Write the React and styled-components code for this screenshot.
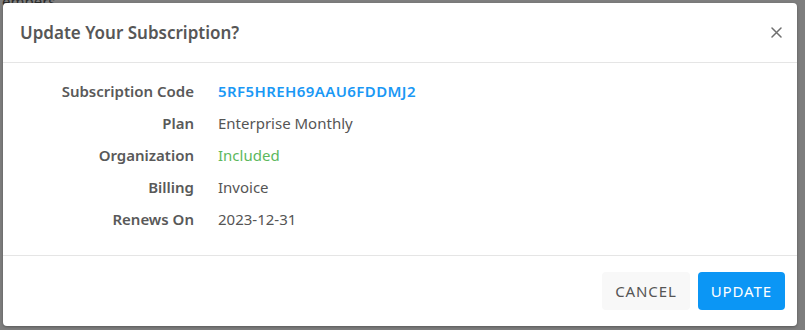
import React from 'react'
import styled, { createGlobalStyle } from 'styled-components'

const GlobalStyle = createGlobalStyle`
  html, body {
    margin: 0;
    padding: 0;
    height: 100%;
  }
  body {
    background: #7e7e7e;
    font-family: "Noto Sans", "Open Sans", sans-serif;
    overflow: hidden;
  }
`;

const details = [
  { label: 'Subscription Code', value: '5RF5HREH69AAU6FDDMJ2', tone: 'code' },
  { label: 'Plan', value: 'Enterprise Monthly' },
  { label: 'Organization', value: 'Included', tone: 'good' },
  { label: 'Billing', value: 'Invoice' },
  { label: 'Renews On', value: '2023-12-31' },
];

export default function App() {
  return (
    <>
      <GlobalStyle />
      <Backdrop>
        <BehindText>embers</BehindText>
        <Modal>
          <Header>
            <Title>Update Your Subscription?</Title>
            <Close aria-label="close">
              <svg width="11" height="11" viewBox="0 0 11 11">
                <path d="M1 1 L10 10 M10 1 L1 10" stroke="#6f6f6f" strokeWidth="1.5" strokeLinecap="round" />
              </svg>
            </Close>
          </Header>
          <Body>
            {details.map(({ label, value, tone }) => (
              <Row key={label}>
                <Label>{label}</Label>
                <Value $tone={tone}>{value}</Value>
              </Row>
            ))}
          </Body>
          <Footer>
            <Button>Cancel</Button>
            <Button $primary>Update</Button>
          </Footer>
        </Modal>
      </Backdrop>
    </>
  )
}

const Backdrop = styled.div`
  position: relative;
  height: 330px;
  padding: 3px 8px 4px 3px;
  box-sizing: border-box;
`;

const BehindText = styled.span`
  position: absolute;
  top: -9px;
  left: 2px;
  font-size: 15px;
  color: #2c2c2c;
`;

const Modal = styled.div`
  position: relative;
  width: 794px;
  height: 323px;
  background: #fff;
  border-radius: 4px;
  display: flex;
  flex-direction: column;
  box-shadow: 0 1px 3px rgba(0,0,0,0.3);
`;

const Header = styled.div`
  height: 59px;
  display: flex;
  align-items: center;
  justify-content: space-between;
  padding: 0 15px 0 17px;
  border-bottom: 1px solid #e5e5e5;
`;

const Title = styled.h2`
  margin: 0;
  font-size: 17px;
  font-weight: 600;
  color: #575757;
`;

const Close = styled.button`
  border: none;
  background: none;
  padding: 0;
  display: flex;
  cursor: pointer;
`;

const Body = styled.div`
  flex: 1;
  padding: 12px 0 20px;
  border-bottom: 1px solid #e5e5e5;
`;

const Row = styled.div`
  display: grid;
  grid-template-columns: 191px 1fr;
  column-gap: 24px;
  height: 32px;
  align-items: center;
  font-size: 15px;
`;

const Label = styled.span`
  text-align: right;
  font-weight: 600;
  color: #595959;
`;

const toneColor = {
  code: '#1a98f5',
  good: '#5cb85c',
};

const Value = styled.span`
  color: ${p => toneColor[p.$tone] || '#555'};
  font-weight: ${p => (p.$tone === 'code' ? 600 : 400)};
  letter-spacing: ${p => (p.$tone === 'code' ? '0.4px' : 'normal')};
`;

const Footer = styled.div`
  height: 71px;
  display: flex;
  align-items: center;
  justify-content: flex-end;
  gap: 8px;
  padding: 0 12px;
`;

const Button = styled.button`
  height: 38px;
  padding: 0 13px;
  border: none;
  border-radius: 4px;
  font-family: inherit;
  font-size: 15px;
  letter-spacing: 0.9px;
  text-transform: uppercase;
  cursor: pointer;
  background: ${p => (p.$primary ? '#0b96f5' : '#f8f8f8')};
  color: ${p => (p.$primary ? '#fff' : '#555')};
`;
